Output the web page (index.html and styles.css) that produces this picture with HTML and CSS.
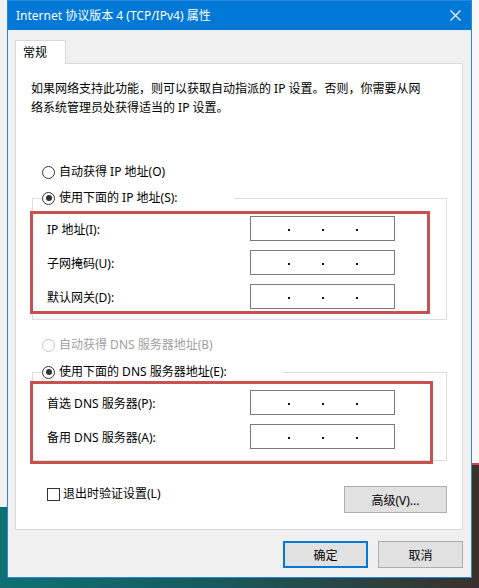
FILE: index.html
```html
<!DOCTYPE html>
<html lang="zh-CN">
<head>
    <meta charset="UTF-8">
    <title>Internet 协议版本 4 (TCP/IPv4) 属性</title>
    <link rel="stylesheet" href="styles.css">
</head>
<body>
    <div class="desktop">
        <div class="backdrop-left"></div>

        <div class="dialog">
            <!-- Title bar -->
            <div class="titlebar">
                <span class="title">Internet 协议版本 4 (TCP/IPv4) 属性</span>
                <svg class="close" width="11" height="11" viewBox="0 0 11 11">
                    <path d="M0.5 0.5 L10.5 10.5 M10.5 0.5 L0.5 10.5" stroke="#fff" stroke-width="1.1" fill="none"/>
                </svg>
            </div>

            <div class="dialog-body">
                <div class="tabs">
                    <div class="tab">常规</div>
                </div>

                <div class="tab-panel">
                    <p class="intro">如果网络支持此功能，则可以获取自动指派的 IP 设置。否则，你需要从网<br>络系统管理员处获得适当的 IP 设置。</p>

                    <!-- IP address -->
                    <div class="radio radio-first"><span class="radio-mark"></span>自动获得 IP 地址(O)</div>
                    <fieldset class="group">
                        <legend><div class="radio checked"><span class="radio-mark"></span>使用下面的 IP 地址(S):</div></legend>
                        <div class="fields">
                            <div class="field"><span class="field-label">IP 地址(I):</span><div class="ip-box"><i></i><i></i><i></i></div></div>
                            <div class="field"><span class="field-label">子网掩码(U):</span><div class="ip-box"><i></i><i></i><i></i></div></div>
                            <div class="field"><span class="field-label">默认网关(D):</span><div class="ip-box"><i></i><i></i><i></i></div></div>
                            <div class="mark mark-ip"></div>
                        </div>
                    </fieldset>

                    <!-- DNS -->
                    <div class="radio radio-dns disabled"><span class="radio-mark"></span>自动获得 DNS 服务器地址(B)</div>
                    <fieldset class="group group-dns">
                        <legend><div class="radio checked"><span class="radio-mark"></span>使用下面的 DNS 服务器地址(E):</div></legend>
                        <div class="fields">
                            <div class="field"><span class="field-label">首选 DNS 服务器(P):</span><div class="ip-box"><i></i><i></i><i></i></div></div>
                            <div class="field"><span class="field-label">备用 DNS 服务器(A):</span><div class="ip-box"><i></i><i></i><i></i></div></div>
                            <div class="mark mark-dns"></div>
                        </div>
                    </fieldset>

                    <div class="options-row">
                        <div class="checkbox"><span class="checkbox-mark"></span>退出时验证设置(L)</div>
                        <button class="btn btn-advanced">高级(V)...</button>
                    </div>
                </div>

                <div class="dialog-actions">
                    <button class="btn btn-default">确定</button>
                    <button class="btn">取消</button>
                </div>
            </div>
        </div>

        <div class="backdrop-right"></div>
    </div>
</body>
</html>
```

FILE: styles.css
```css
/* Global */
body {
    margin: 0;
    font-family: "Noto Sans", "Noto Sans CJK SC", sans-serif;
    font-size: 12px;
    color: #000;
    background: linear-gradient(to right, #0d7174 0%, #165a5e 45%, #3a302b 100%);
}

.desktop {
    display: flex;
    align-items: flex-start;
    height: 588px;
    overflow: hidden;
}

/* Windows behind the dialog */
.backdrop-left {
    width: 7px;
    height: 507px;
    background: #f2f2f2;
}

.backdrop-right {
    width: 7px;
    height: 463px;
    background: #f7f7f7;
    border-bottom: 2px solid #c94a4a;
}

/* Dialog frame */
.dialog {
    width: 463px;
    height: 576px;
    border: 1px solid #2d87d6;
    background: #f0f0f0;
    display: flex;
    flex-direction: column;
}

.titlebar {
    height: 29px;
    background: #0078d7;
    color: #fff;
    display: flex;
    align-items: center;
    justify-content: space-between;
    padding: 0 10px 0 8px;
}

.title {
    line-height: 16px;
}

.dialog-body {
    flex: 1;
    display: flex;
    flex-direction: column;
    padding: 10px 8px 8px 7px;
}

/* Tabs */
.tabs {
    display: flex;
}

.tab {
    position: relative;
    z-index: 1;
    width: 42px;
    height: 23px;
    line-height: 23px;
    padding-left: 7px;
    background: #fff;
    border: 1px solid #d9d9d9;
    border-bottom: none;
    margin-bottom: -1px;
}

.tab-panel {
    background: #fff;
    border: 1px solid #d9d9d9;
    padding: 15px 15px 16px 16px;
}

.intro {
    margin: 0 0 45px -1px;
    line-height: 19px;
}

/* Radio buttons */
.radio {
    display: flex;
    align-items: center;
    gap: 4px;
    height: 20px;
    line-height: 20px;
    white-space: nowrap;
}

.radio-first,
.radio-dns {
    margin-left: 10px;
}

.radio-dns {
    margin-top: 15px;
}

.radio-mark {
    width: 11px;
    height: 11px;
    border: 1px solid #333;
    border-radius: 50%;
    background: #fff;
    display: flex;
    align-items: center;
    justify-content: center;
}

.radio.checked .radio-mark::after {
    content: "";
    width: 6px;
    height: 6px;
    border-radius: 50%;
    background: #333;
}

.radio.disabled {
    color: #a0a0a0;
}

.radio.disabled .radio-mark {
    border-color: #c4c4c4;
}

/* Group boxes */
.group {
    margin: 6px 0 0 0;
    min-width: 0;
    border: 1px solid #dcdcdc;
    padding: 8px 0 10px 14px;
}

.group-dns {
    margin-top: 7px;
    padding-bottom: 11px;
}

.group legend {
    padding: 0 56px 0 0;
    margin-left: -5px;
}

.fields {
    position: relative;
    display: flex;
    flex-direction: column;
    gap: 9px;
}

.field {
    display: flex;
    align-items: center;
    height: 25px;
}

.field-label {
    width: 203px;
}

.ip-box {
    width: 106px;
    height: 23px;
    padding-left: 37px;
    border: 1px solid #7a7a7a;
    display: flex;
    align-items: center;
    gap: 32px;
}

.ip-box i {
    width: 2px;
    height: 2px;
    margin-top: 3px;
    background: #111;
}

/* Red annotation frames */
.mark {
    position: absolute;
    border: 3px solid #c8504f;
    pointer-events: none;
}

.mark-ip {
    left: -17px;
    top: -5px;
    width: 394px;
    bottom: -5px;
}

.mark-dns {
    left: -17px;
    top: -9px;
    width: 397px;
    bottom: -15px;
}

/* Bottom options */
.options-row {
    display: flex;
    justify-content: space-between;
    align-items: flex-start;
    margin-top: 25px;
}

.checkbox {
    display: flex;
    align-items: center;
    gap: 3px;
    margin-left: 15px;
    height: 16px;
    line-height: 16px;
}

.checkbox-mark {
    width: 11px;
    height: 11px;
    border: 1px solid #333;
    background: #fff;
}

/* Buttons */
.btn {
    font-family: inherit;
    font-size: 12px;
    color: #000;
    background: #e1e1e1;
    border: 1px solid #adadad;
    width: 85px;
    height: 27px;
    padding: 0;
}

.btn-advanced {
    width: 103px;
}

.btn-default {
    border: 2px solid #0078d7;
}

.dialog-actions {
    display: flex;
    justify-content: flex-end;
    gap: 10px;
    margin-top: 11px;
}
```
